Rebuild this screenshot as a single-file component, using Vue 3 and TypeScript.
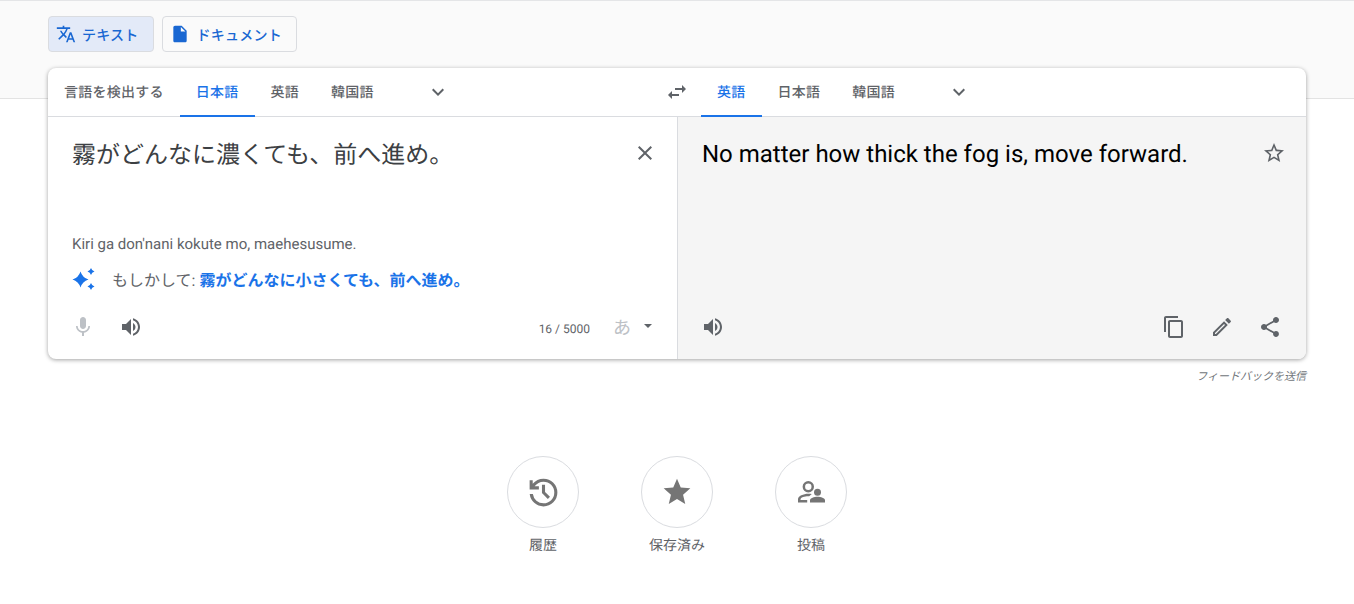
<script setup lang="ts">
interface Tab { label: string; active?: boolean }
const sourceTabs: Tab[] = [
  { label: '言語を検出する' },
  { label: '日本語', active: true },
  { label: '英語' },
  { label: '韓国語' },
]
const targetTabs: Tab[] = [
  { label: '英語', active: true },
  { label: '日本語' },
  { label: '韓国語' },
]
const chevron = 'M16.59 8.59L12 13.17 7.41 8.59 6 10l6 6 6-6z'
const volume = 'M3 9v6h4l5 5V4L7 9H3zm13.5 3c0-1.77-1.02-3.29-2.5-4.03v8.05c1.48-.73 2.5-2.25 2.5-4.02zM14 3.23v2.06c2.89.86 5 3.54 5 6.71s-2.11 5.85-5 6.71v2.06c4.01-.91 7-4.49 7-8.77s-2.99-7.86-7-8.77z'
</script>

<template>
  <div class="page">
    <div class="modes">
      <button class="mode active">
        <svg class="mode-icon" viewBox="0 0 24 24"><path d="M12.87 15.07l-2.54-2.51.03-.03c1.74-1.94 2.98-4.17 3.71-6.53H17V4h-7V2H8v2H1v1.99h11.17C11.5 7.92 10.44 9.75 9 11.35 8.07 10.32 7.3 9.19 6.69 8h-2c.73 1.63 1.73 3.17 2.98 4.56l-5.09 5.02L4 19l5-5 3.11 3.11.76-2.04zM18.5 10h-2L12 22h2l1.12-3h4.75L21 22h2l-4.5-12zm-2.62 7l1.62-4.33L19.12 17h-3.24z" /></svg>
        <span class="mode-text">テキスト</span>
      </button>
      <button class="mode doc">
        <svg class="mode-icon" viewBox="0 0 24 24"><path d="M6 2c-1.1 0-1.99.9-1.99 2L4 20c0 1.1.89 2 1.99 2H18c1.1 0 2-.9 2-2V8l-6-6H6zm7 7V3.5L18.5 9H13z" /></svg>
        <span class="mode-text">ドキュメント</span>
      </button>
    </div>

    <section class="card">
      <header class="lang-bar">
        <div class="lang-side">
          <span v-for="t in sourceTabs" :key="t.label" class="tab" :class="{ on: t.active }">{{ t.label }}</span>
          <span class="icon-btn more"><svg viewBox="0 0 24 24"><path :d="chevron" /></svg></span>
        </div>
        <span class="icon-btn swap"><svg viewBox="0 0 24 24"><path d="M6.99 11L3 15l3.99 4v-3H14v-2H6.99v-3zM21 9l-3.99-4v3H10v2h7.01v3L21 9z" /></svg></span>
        <div class="lang-side">
          <span v-for="t in targetTabs" :key="t.label" class="tab" :class="{ on: t.active }">{{ t.label }}</span>
          <span class="icon-btn more"><svg viewBox="0 0 24 24"><path :d="chevron" /></svg></span>
        </div>
      </header>

      <div class="panels">
        <div class="panel source">
          <div class="text-row">
            <p class="main-text">霧がどんなに濃くても、前へ進め。</p>
            <span class="icon-btn"><svg viewBox="0 0 24 24"><path d="M19 6.41L17.59 5 12 10.59 6.41 5 5 6.41 10.59 12 5 17.59 6.41 19 12 13.41 17.59 19 19 17.59 13.41 12z" /></svg></span>
          </div>
          <p class="romaji">Kiri ga don'nani kokute mo, maehesusume.</p>
          <div class="suggest">
            <svg class="sparkle" viewBox="0 0 24 24">
              <path d="M8.500 3.500Q10.400 9.600 16.500 11.500 10.400 13.400 8.500 19.500 6.600 13.400 .5 11.500 6.600 9.600 8.500 3.500z" />
              <path d="M19 0Q19.800 2.700 22.500 3.500 19.800 4.300 19 7 18.200 4.300 15.500 3.500 18.200 2.700 19 0z" />
              <path d="M19 15Q19.800 17.700 22.500 18.500 19.800 19.300 19 22 18.200 19.300 15.500 18.500 18.200 17.700 19 15z" />
            </svg>
            <span class="suggest-label">もしかして: <strong>霧がどんなに小さくても、前へ進め。</strong></span>
          </div>
          <div class="foot">
            <span class="icon-btn muted"><svg viewBox="0 0 24 24"><path d="M12 14c1.660 0 2.990-1.340 2.990-3L15 5c0-1.660-1.340-3-3-3S9 3.340 9 5v6c0 1.660 1.340 3 3 3zm5.300-3c0 3-2.540 5.100-5.300 5.100S6.700 14 6.700 11H5c0 3.410 2.720 6.230 6 6.720V21h2v-3.280c3.280-.48 6-3.300 6-6.720h-1.700z" /></svg></span>
            <span class="icon-btn"><svg viewBox="0 0 24 24"><path :d="volume" /></svg></span>
            <span class="count">16 / 5000</span>
            <span class="kana">あ</span>
            <svg class="caret" viewBox="0 0 8 4"><path d="M0 0h8L4 4z" /></svg>
          </div>
        </div>

        <div class="panel target">
          <div class="text-row">
            <p class="main-text en">No matter how thick the fog is, move forward.</p>
            <span class="icon-btn"><svg viewBox="0 0 24 24"><path d="M22 9.240l-7.190-.62L12 2 9.190 8.630 2 9.240l5.460 4.730L5.820 21 12 17.270 18.180 21l-1.630-7.030L22 9.240zM12 15.400l-3.760 2.270 1-4.280-3.320-2.880 4.380-.38L12 6.100l1.710 4.040 4.380.38-3.320 2.880 1 4.280L12 15.400z" /></svg></span>
          </div>
          <div class="foot">
            <span class="icon-btn"><svg viewBox="0 0 24 24"><path :d="volume" /></svg></span>
            <span class="spacer"></span>
            <span class="icon-btn"><svg viewBox="0 0 24 24"><path d="M16 1H4c-1.100 0-2 .9-2 2v14h2V3h12V1zm3 4H8c-1.100 0-2 .9-2 2v14c0 1.100.9 2 2 2h11c1.100 0 2-.9 2-2V7c0-1.100-.9-2-2-2zm0 16H8V7h11v14z" /></svg></span>
            <span class="icon-btn"><svg viewBox="0 0 24 24"><path d="M14.060 9.020l.92.92L5.920 19H5v-.92l9.060-9.060M17.660 3c-.25 0-.51.1-.7.29l-1.830 1.830 3.750 3.750 1.830-1.830c.39-.39.39-1.020 0-1.410l-2.340-2.340c-.2-.2-.45-.29-.71-.29zm-3.600 3.190L3 17.250V21h3.750L17.810 9.940l-3.750-3.750z" /></svg></span>
            <span class="icon-btn"><svg viewBox="0 0 24 24"><path d="M18 16.080c-.76 0-1.440.3-1.960.77L8.910 12.700c.05-.23.09-.46.09-.7s-.04-.47-.09-.7l7.050-4.110c.54.5 1.250.81 2.040.81 1.660 0 3-1.340 3-3s-1.340-3-3-3-3 1.340-3 3c0 .24.04.47.09.7L8.040 9.810C7.500 9.310 6.790 9 6 9c-1.660 0-3 1.340-3 3s1.340 3 3 3c.79 0 1.500-.31 2.040-.81l7.120 4.160c-.05.21-.08.43-.08.65 0 1.610 1.310 2.920 2.920 2.920 1.610 0 2.920-1.310 2.920-2.920s-1.310-2.920-2.920-2.920z" /></svg></span>
          </div>
        </div>
      </div>
    </section>

    <p class="feedback">フィードバックを送信</p>

    <nav class="shortcuts">
      <div class="shortcut">
        <span class="circle"><svg class="history" viewBox="0 0 24 24"><path d="M12 21q-3.450 0-6.012-2.288T3.050 13H5.100q.35 2.600 2.313 4.300T12 19q2.925 0 4.963-2.037T19 12q0-2.925-2.037-4.963T12 5q-1.725 0-3.225.8T6.250 8H9v2H3V4h2v2.350q1.275-1.600 3.113-2.475T12 3q3.750 0 6.375 2.625T21 12q0 3.750-2.625 6.375T12 21zm2.800-4.800L11 12.400V7h2v4.600l3.200 3.200-1.400 1.400z" /></svg></span>
        <span class="shortcut-label">履歴</span>
      </div>
      <div class="shortcut">
        <span class="circle"><svg viewBox="0 0 24 24"><path d="M12 17.270L18.180 21l-1.640-7.030L22 9.240l-7.190-.61L12 2 9.190 8.630 2 9.240l5.460 4.730L5.820 21z" /></svg></span>
        <span class="shortcut-label">保存済み</span>
      </div>
      <div class="shortcut">
        <span class="circle"><svg viewBox="0 0 32 32">
          <path fill-rule="evenodd" d="M13.300 5a5.700 5.700 0 1 1 0 11.400 5.700 5.700 0 0 1 0-11.400zm0 2.500a3.200 3.200 0 1 0 0 6.400 3.200 3.200 0 0 0 0-6.400z" />
          <path d="M3 26.400v-3.200c0-3.200 5.500-5.500 10.300-5.500 1.200 0 2.400.1 3.500.4l-2.600 2.100c-3.500-.3-8.700 1-8.700 3v.9h6.700v2.300z" />
          <circle cx="22.500" cy="16.300" r="3.500" />
          <path d="M15 26.400v-2.300c0-1.900 4.200-3.400 7.500-3.400s7.500 1.500 7.500 3.400v2.300z" />
        </svg></span>
        <span class="shortcut-label">投稿</span>
      </div>
    </nav>
  </div>
</template>

<style scoped>
.page {
  height: 604px;
  box-sizing: border-box;
  padding: 16px 48px 0;
  overflow: hidden;
  background: linear-gradient(#e4e5e7 0 1px, #fafafa 1px 98px, #e3e3e3 98px 99px, #fff 99px);
  font-family: Roboto, "Noto Sans CJK JP", sans-serif;
  color: #5f6368;
  text-rendering: geometricPrecision;
}
p { margin: 0; }
svg { display: block; fill: currentColor; }

.modes { display: flex; gap: 8px; }
.mode {
  display: flex;
  align-items: center;
  gap: 6px;
  height: 36px;
  box-sizing: border-box;
  padding: 0 14px 0 7px;
  border: 1px solid #dadce0;
  border-radius: 4px;
  background: #fafafa;
  color: #1967d2;
  font: 500 14px/20px Roboto, "Noto Sans CJK JP", sans-serif;
  letter-spacing: .25px;
}
.mode.doc { gap: 7px; }
.mode-text { padding-top: 1px; }
.mode.active { background: #e3eaf8; }
.mode-icon { width: 20px; height: 20px; }

.card {
  margin-top: 16px;
  height: 291px;
  display: flex;
  flex-direction: column;
  background: #fff;
  border-radius: 8px;
  box-shadow: 0 1px 4px 0 rgba(0, 0, 0, .37);
  overflow: hidden;
}
.lang-bar {
  display: grid;
  grid-template-columns: 605px 48px 1fr;
  height: 49px;
  box-sizing: border-box;
  border-bottom: 1px solid #dadce0;
}
.lang-side { display: flex; align-items: stretch; }
.tab {
  display: flex;
  align-items: center;
  padding: 1px 16px 0;
  font-size: 14px;
  font-weight: 500;
  letter-spacing: .25px;
  box-sizing: border-box;
  border-bottom: 2px solid transparent;
  margin-bottom: -1px;
}
.tab.on { color: #1a73e8; border-bottom-color: #1a73e8; }

.icon-btn {
  flex: none;
  width: 48px;
  height: 48px;
  display: flex;
  align-items: center;
  justify-content: center;
  color: #5f6368;
}
.icon-btn svg { width: 24px; height: 24px; }
.more { margin-left: 24px; }
.muted { color: #bdc1c6; }

.panels { flex: 1; display: flex; min-height: 0; }
.panel { display: flex; flex-direction: column; box-sizing: border-box; }
.source { width: 629px; }
.target { flex: 1; background: #f5f5f5; border-left: 1px solid #dadce0; }

.text-row { display: flex; padding: 12px 8px 0 24px; }
.source .text-row { height: 117px; box-sizing: border-box; }
.main-text {
  flex: 1;
  padding-top: 10px;
  font-size: 24px;
  line-height: 32px;
  color: #3c4043;
}
.main-text.en { padding-top: 9px; color: #000; }

.romaji { padding-left: 24px; font-size: 15px; line-height: 20px; }
.suggest {
  display: flex;
  align-items: center;
  margin-top: 14px;
  padding-left: 24px;
  height: 24px;
}
.sparkle { width: 24px; height: 24px; color: #1a73e8; }
.suggest-label { margin-left: 16px; padding-top: 1px; font-size: 16px; line-height: 24px; }
.suggest-label strong { font-weight: 700; color: #1a73e8; }

.foot {
  margin-top: auto;
  padding: 0 12px 8px 11px;
  display: flex;
  align-items: center;
}
.spacer { flex: 1; }
.count { margin-left: auto; margin-top: 4px; font-size: 12px; line-height: 16px; }
.kana { margin-left: 23px; margin-top: 4px; font-size: 18px; line-height: 24px; color: #bdc1c6; }
.caret { width: 8px; height: 4px; margin: -3px 13px 0 13px; color: #5f6368; }

.feedback {
  margin-top: 10px;
  text-align: right;
  font-size: 11px;
  line-height: 16px;
  font-style: italic;
  color: #70757a;
}

.shortcuts {
  margin-top: 71px;
  display: flex;
  justify-content: center;
}
.shortcut {
  width: 134px;
  display: flex;
  flex-direction: column;
  align-items: center;
}
.circle {
  width: 72px;
  height: 72px;
  box-sizing: border-box;
  border: 1px solid #dadce0;
  border-radius: 50%;
  display: flex;
  align-items: center;
  justify-content: center;
  color: #757575;
}
.circle svg { width: 32px; height: 32px; }
.circle svg.history { width: 37px; height: 37px; }
.shortcut-label { margin-top: 8px; font-size: 14px; line-height: 20px; color: #5f6368; }
</style>
